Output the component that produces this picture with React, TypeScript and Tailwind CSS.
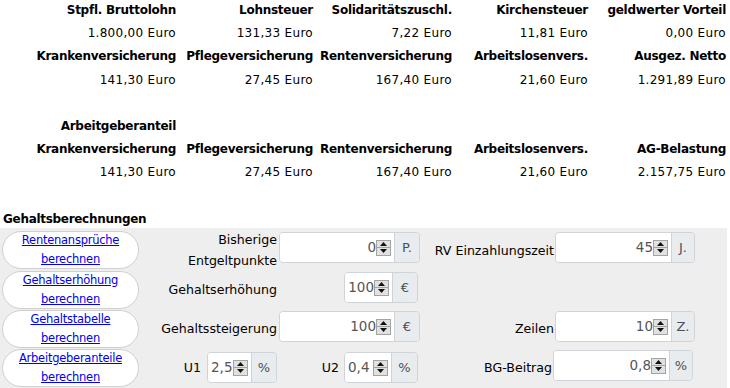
import React from "react";

const F = { fontFamily: '"DejaVu Sans", Verdana, sans-serif' };

function Spinner() {
  return (
    <div className="flex flex-col w-[15px] h-[16px] border border-[#a3a3a3] bg-[#e1e1e1] shrink-0">
      <div className="flex-1 flex items-center justify-center border-b border-[#a3a3a3]">
        <svg width="7" height="4" viewBox="0 0 7 4"><polygon points="3.5,0 7,4 0,4" fill="#111" /></svg>
      </div>
      <div className="flex-1 flex items-center justify-center">
        <svg width="7" height="4" viewBox="0 0 7 4"><polygon points="0,0 7,0 3.5,4" fill="#111" /></svg>
      </div>
    </div>
  );
}

function NumInput({ value, unit, white, unitW, left }: { value: string; unit: string; white: number; unitW: number; left?: boolean }) {
  return (
    <div className="flex h-[31px] border border-[#ced4da] rounded-[4px] overflow-hidden shrink-0">
      <div className="flex items-center bg-white pr-[3px]" style={{ width: white }}>
        {left ? (
          <div className="flex-1 whitespace-nowrap pl-[3px] text-[#555] text-[13.5px] leading-none -mr-[2px]">{value}</div>
        ) : (
          <div className="flex-1 text-right whitespace-nowrap text-[#555] text-[13.5px] leading-none">{value}</div>
        )}
        <Spinner />
      </div>
      <div className="flex items-center justify-center bg-[#e9ecef] border-l border-[#ced4da] text-[#495057] text-[13px]" style={{ width: unitW }}>
        {unit}
      </div>
    </div>
  );
}

function LinkBtn({ a }: { a: string }) {
  return (
    <div className="w-[137px] h-[38px] rounded-full bg-white border border-[#d0d0d0] flex flex-col items-center justify-center leading-[19px] text-[11.5px] tracking-[-0.25px] text-[#0000ee] shrink-0">
      <span className="underline">{a}</span>
      <span className="underline">berechnen</span>
    </div>
  );
}

const cols = "grid grid-cols-[176px_137px_139px_136px_138px]";

function Row({ cells, bold }: { cells: string[]; bold?: boolean }) {
  return (
    <div className={cols}>
      {cells.map((c, i) => (
        <div
          key={i}
          className={
            "h-[23.2px] leading-[23.2px] text-right whitespace-nowrap text-[12px] text-black " +
            (bold ? "font-bold tracking-[-0.27px]" : "tracking-[0.3px]")
          }
        >
          {c}
        </div>
      ))}
    </div>
  );
}

export default function App() {
  return (
    <div style={F} className="w-[730px] h-[388px] overflow-hidden bg-white relative">
      <div className="-mt-[1px]">
        <Row bold cells={["Stpfl. Bruttolohn", "Lohnsteuer", "Solidaritätszuschl.", "Kirchensteuer", "geldwerter Vorteil"]} />
        <Row cells={["1.800,00 Euro", "131,33 Euro", "7,22 Euro", "11,81 Euro", "0,00 Euro"]} />
        <Row bold cells={["Krankenversicherung", "Pflegeversicherung", "Rentenversicherung", "Arbeitslosenvers.", "Ausgez. Netto"]} />
        <Row cells={["141,30 Euro", "27,45 Euro", "167,40 Euro", "21,60 Euro", "1.291,89 Euro"]} />
        <Row cells={["", "", "", "", ""]} />
        <Row bold cells={["Arbeitgeberanteil", "", "", "", ""]} />
        <Row bold cells={["Krankenversicherung", "Pflegeversicherung", "Rentenversicherung", "Arbeitslosenvers.", "AG-Belastung"]} />
        <Row cells={["141,30 Euro", "27,45 Euro", "167,40 Euro", "21,60 Euro", "2.157,75 Euro"]} />
        <div className="h-[23.2px]" />
        <div className="h-[23.2px] leading-[23.2px] pl-[3px] font-bold tracking-[-0.3px] text-[12px] text-black">Gehaltsberechnungen</div>
      </div>

      <div className="absolute left-0 top-[228px] w-[727px] h-[160px] bg-[#eeeeee] pl-[2px] pt-[3px] text-[12.6px] text-black">
        {/* Row 1 */}
        <div className="flex h-[40px] items-start">
          <LinkBtn a="Rentenansprüche" />
          <div className="w-[138px] h-[40px] flex flex-col justify-center items-end leading-[21px] text-right -mt-[1px]">
            <span>Bisherige</span>
            <span>Entgeltpunkte</span>
          </div>
          <div className="ml-[2px] mt-[1px]">
            <NumInput value="0" unit="P." white={114} unitW={25} />
          </div>
          <div className="w-[134px] h-[40px] flex items-center justify-end">RV Einzahlungszeit</div>
          <div className="ml-[1px] mt-[1px]">
            <NumInput value="45" unit="J." white={115} unitW={23} />
          </div>
        </div>
        {/* Row 2 */}
        <div className="flex h-[39px] items-start">
          <LinkBtn a="Gehaltserhöhung" />
          <div className="w-[138px] h-[39px] flex items-center justify-end">Gehaltserhöhung</div>
          <div className="ml-[2px] mt-[1px] w-[139px] flex justify-end">
            <NumInput value="100" unit="€" white={47} unitW={25} />
          </div>
        </div>
        {/* Row 3 */}
        <div className="flex h-[39px] items-start">
          <LinkBtn a="Gehaltstabelle" />
          <div className="w-[138px] h-[39px] flex items-center justify-end">Gehaltssteigerung</div>
          <div className="ml-[2px] mt-[1px]">
            <NumInput value="100" unit="€" white={114} unitW={25} />
          </div>
          <div className="w-[134px] h-[39px] flex items-center justify-end">Zeilen</div>
          <div className="ml-[1px] mt-[1px]">
            <NumInput value="10" unit="Z." white={115} unitW={23} />
          </div>
        </div>
        {/* Row 4 */}
        <div className="flex h-[39px] items-start">
          <LinkBtn a="Arbeitgeberanteile" />
          <div className="w-[138px] h-[39px] flex items-center justify-end">
            <span className="mr-[6px]">U1</span>
            <div className="mt-[-2px]">
              <NumInput value="2,5" unit="%" white={43} unitW={25} left />
            </div>
          </div>
          <div className="ml-[2px] w-[139px] h-[39px] flex items-center justify-end">
            <span className="mr-[5px]">U2</span>
            <div className="mt-[-2px]">
              <NumInput value="0,4" unit="%" white={46} unitW={26} left />
            </div>
          </div>
          <div className="w-[134px] h-[39px] flex items-center justify-end">BG-Beitrag</div>
          <div className="ml-[1px] mt-[1px]">
            <NumInput value="0,8" unit="%" white={115} unitW={23} />
          </div>
        </div>
      </div>
    </div>
  );
}
